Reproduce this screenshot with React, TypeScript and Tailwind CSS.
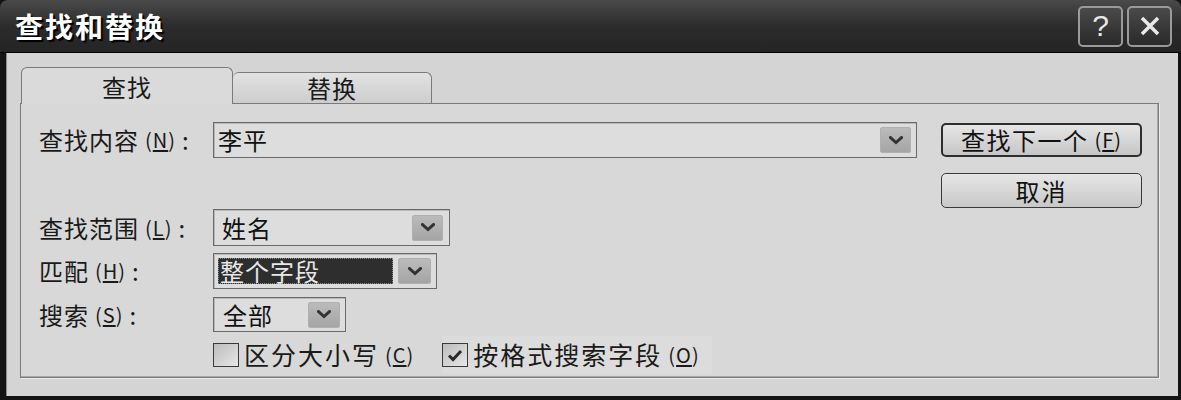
import React from 'react'

const font = "font-['Noto_Sans_CJK_SC','Noto_Sans',sans-serif]"

const Chevron = () => (
    <svg width="14" height="9" viewBox="0 0 14 9" fill="none">
        <path d="M1.5 1.5L7 6.5L12.5 1.5" stroke="#333" strokeWidth="3" strokeLinecap="square" />
    </svg>
)

const ArrowBtn = ({ w = 'w-[31px]' }: { w?: string }) => (
    <div className={`${w} h-[26px] rounded-[3px] bg-gradient-to-b from-[#bcbcbc] to-[#a4a4a4] shadow-[inset_0_0_0_1px_#b0b0b0] flex items-center justify-center shrink-0`}>
        <Chevron />
    </div>
)

const Key = ({ k }: { k: string }) => (
    <span className="text-[20px] ml-[6px] tracking-[1px]">
        (<span className="underline underline-offset-2">{k}</span>)
    </span>
)

const Label = ({ text, k }: { text: string; k: string }) => (
    <div className="w-[174px] shrink-0 text-[24px] text-[#1a1a1a] tracking-[1px] flex items-center">
        {text}
        <Key k={k} />
        <span className="ml-[6px]">:</span>
    </div>
)

const Checkbox = ({ checked }: { checked?: boolean }) => (
    <div className="w-[26px] h-[24px] border border-[#3a3a3a] bg-gradient-to-br from-[#bdbdbd] to-[#e6e6e6] flex items-center justify-center shrink-0">
        {checked && (
            <svg width="16" height="13" viewBox="0 0 16 13" fill="none">
                <path d="M2 6.5L6 10.5L14 2" stroke="#2b2b2b" strokeWidth="3" />
            </svg>
        )}
    </div>
)

const App = () => {
    return (
        <div className={`w-[1181px] h-[400px] bg-[#141414] flex flex-col overflow-hidden ${font}`}>
            {/* Title bar */}
            <div className="h-[53px] shrink-0 rounded-t-[8px] bg-gradient-to-b from-[#4a4a4a] via-[#2c2c2c] to-[#242424] border-b border-black flex items-center pl-[15px] pr-[9px]">
                <span className="text-white font-bold text-[28px] tracking-[2px] [text-shadow:2px_2px_1px_#000]">
                    查找和替换
                </span>
                <div className="ml-auto flex gap-[4px]">
                    <div className="w-[45px] h-[41px] rounded-[5px] border-2 border-[#9a9a9a] bg-gradient-to-b from-[#4a4a4a] to-[#2a2a2a] flex items-center justify-center">
                        <span className="text-[#e8e8e8] text-[30px] leading-none font-['Liberation_Sans',sans-serif]">?</span>
                    </div>
                    <div className="w-[45px] h-[41px] rounded-[5px] border-2 border-[#9a9a9a] bg-gradient-to-b from-[#4a4a4a] to-[#2a2a2a] flex items-center justify-center">
                        <svg width="22" height="22" viewBox="0 0 22 22">
                            <path d="M3 3L19 19M19 3L3 19" stroke="#e8e8e8" strokeWidth="3.5" />
                        </svg>
                    </div>
                </div>
            </div>

            {/* Body */}
            <div className="h-[343px] ml-[6px] mr-[3px] bg-[#d4d4d4] border-l border-[#8a8a8a] pt-[14px] pl-[13px] pr-[19px] pb-[18px] flex flex-col">
                {/* Tabs */}
                <div className="h-[36px] flex items-end pl-[1px] relative z-10">
                    <div className="w-[212px] h-[37px] -mb-px rounded-t-[6px] border border-b-0 border-[#7a7a7a] bg-[#dadada] flex justify-center pt-[1px] text-[24px] tracking-[1px] text-[#1a1a1a]">
                        查找
                    </div>
                    <div className="w-[199px] h-[31px] rounded-t-[6px] border border-l-0 border-b-0 border-[#7a7a7a] bg-gradient-to-b from-[#e2e2e2] to-[#cdcdcd] flex justify-center text-[24px] tracking-[1px] leading-[30px] text-[#1a1a1a]">
                        替换
                    </div>
                </div>

                {/* Panel */}
                <div className="flex-1 border border-[#7a7a7a] bg-[#d8d8d8] shadow-[inset_-1px_-1px_0_#a8a8a8,1px_1px_0_#ececec] pl-[18px] pr-[16px] pt-[18px] flex">
                    <div className="flex-1 flex flex-col">
                        <div className="flex h-[36px]">
                            <Label text="查找内容" k="N" />
                            <div className="w-[704px] h-[36px] border border-[#6a6a6a] bg-[#dddddd] shadow-[inset_1px_1px_0_#b8b8b8] flex items-center pl-[4px] pr-[5px]">
                                <span className="text-[24px] tracking-[1px] text-[#111]">李平</span>
                                <div className="ml-auto"><ArrowBtn /></div>
                            </div>
                        </div>

                        <div className="flex h-[37px] mt-[51px]">
                            <Label text="查找范围" k="L" />
                            <div className="w-[237px] h-[37px] border border-[#6a6a6a] bg-[#dddddd] shadow-[inset_1px_1px_0_#b8b8b8] flex items-center pl-[8px] pr-[6px]">
                                <span className="text-[24px] tracking-[1px] text-[#111]">姓名</span>
                                <div className="ml-auto"><ArrowBtn /></div>
                            </div>
                        </div>

                        <div className="flex h-[36px] mt-[7px]">
                            <Label text="匹配" k="H" />
                            <div className="w-[224px] h-[36px] border border-[#6a6a6a] bg-[#dddddd] shadow-[inset_1px_1px_0_#b8b8b8] flex items-center pl-[4px] pr-[5px]">
                                <div className="w-[175px] h-[26px] bg-[#2e2e2e] border border-dotted border-[#8a8a8a] flex items-center pl-[1px]">
                                    <span className="text-[24px] tracking-[1px] text-[#e8e8e8] leading-none">整个字段</span>
                                </div>
                                <div className="ml-auto"><ArrowBtn w="w-[33px]" /></div>
                            </div>
                        </div>

                        <div className="flex h-[35px] mt-[8px]">
                            <Label text="搜索" k="S" />
                            <div className="w-[133px] h-[35px] border border-[#6a6a6a] bg-[#dddddd] shadow-[inset_1px_1px_0_#b8b8b8] flex items-center pl-[9px] pr-[5px]">
                                <span className="text-[24px] tracking-[1px] text-[#111]">全部</span>
                                <div className="ml-auto"><ArrowBtn w="w-[32px]" /></div>
                            </div>
                        </div>

                        <div className="flex h-[24px] mt-[11px] pl-[174px] items-center text-[25px] tracking-[2px] text-[#1a1a1a]">
                            <Checkbox />
                            <span className="ml-[5px] flex items-center">区分大小写<Key k="C" /></span>
                            <div className="ml-[28px] flex items-center bg-[#dcdcdc] pr-[12px]">
                                <Checkbox checked />
                                <span className="ml-[5px] flex items-center">按格式搜索字段<Key k="O" /></span>
                            </div>
                        </div>
                    </div>

                    {/* Buttons */}
                    <div className="w-[201px] ml-[24px] flex flex-col pt-[1px] gap-[16px]">
                        <button className="h-[34px] rounded-[5px] border-2 border-[#2e2e2e] bg-gradient-to-b from-[#e6e6e6] to-[#c6c6c6] text-[24px] tracking-[1.5px] text-[#111] flex items-center justify-center leading-none">
                            查找下一个<Key k="F" />
                        </button>
                        <button className="h-[35px] rounded-[5px] border border-[#3a3a3a] bg-gradient-to-b from-[#e6e6e6] to-[#c8c8c8] text-[24px] tracking-[2px] text-[#111] flex items-center justify-center leading-none">
                            取消
                        </button>
                    </div>
                </div>
            </div>
        </div>
    )
}

export default App
